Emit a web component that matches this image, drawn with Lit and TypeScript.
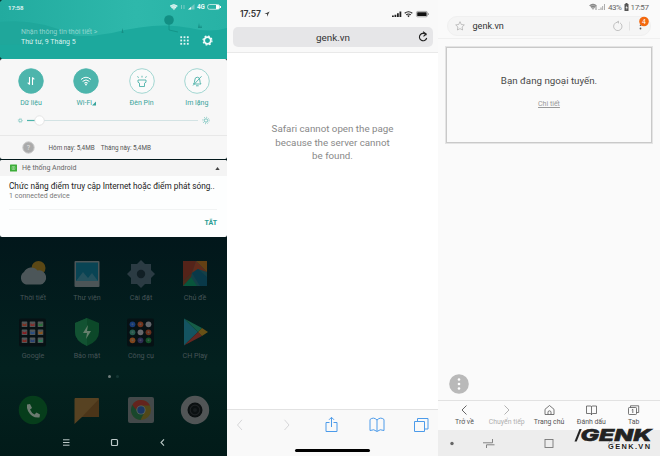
import { LitElement, html, svg, css, SVGTemplateResult } from "lit";
import { customElement } from "lit/decorators.js";

const icon = (w: number, h: number, body: SVGTemplateResult, cls = "") =>
  html`<svg class=${cls} width=${w} height=${h} viewBox="0 0 ${w} ${h}" fill="none">${body}</svg>`;

/* ---------- MIUI phone ---------- */

@customElement("miui-phone")
class MiuiPhone extends LitElement {
  static styles = css`
    :host { display: flex; flex-direction: column; width: 227px; height: 456px; background: #02181b; font-family: Roboto, "Noto Sans", sans-serif; box-sizing: border-box; }
    svg { display: block; flex: none; }
    .head { height: 59px; display: grid; background: #1eab9e; flex: none; }
    .head > * { grid-area: 1 / 1; }
    .headtext { display: flex; flex-direction: column; z-index: 1; }
    .status { height: 14px; display: flex; align-items: center; justify-content: space-between; padding: 0 5px 0 8px; color: #e4f7f5; font-size: 6.1px; font-weight: 600; }
    .row { display: flex; align-items: flex-end; justify-content: space-between; height: 33px; padding: 0 14px 0 21px; }
    .weather { font-size: 7px; line-height: 9.3px; color: #d9f3f0; white-space: nowrap; }
    .weather .dim { color: #8fd4cd; font-size: 7px; }
    .tools { display: flex; gap: 13px; align-items: center; padding-bottom: 1px; }
    .panel { height: 100px; flex: none; background: #f7f7f7; border-radius: 2px; display: flex; flex-direction: column; }
    .tiles { display: grid; grid-template-columns: repeat(4, 55.3px); padding: 9px 0 0 3.3px; }
    .tile { display: flex; flex-direction: column; align-items: center; font-size: 7px; line-height: 8px; color: #37a49b; gap: 5px; }
    .wifi { display: flex; align-items: center; }
    .slider { height: 28px; box-sizing: border-box; display: flex; align-items: flex-start; padding: 7px 0 0 17px; }
    .usage { border-top: 1px solid #e8e8e8; flex: 1; display: flex; align-items: center; padding-left: 22px; font-size: 6.35px; color: #555; white-space: nowrap; }
    .usage .a { margin-left: 13.5px; }
    .usage .b { margin-left: 6px; }
    .notice { margin-top: 1px; height: 77px; flex: none; background: #fdfefe; border-radius: 2px; overflow: hidden; }
    .nhead { height: 16px; background: #f4f4f4; display: flex; align-items: center; padding: 0 7px 0 10px; font-size: 7px; color: #666; gap: 5px; }
    .nhead svg:last-child { margin-left: auto; }
    .ntitle { padding: 4.5px 0 0 9px; font-size: 8.25px; line-height: 10px; color: #222; white-space: nowrap; }
    .nsub { padding-left: 9px; font-size: 7px; line-height: 11px; color: #777; letter-spacing: 0.03px; }
    .nact { margin: 7px 10px 0 9px; border-top: 1px solid #f1f3f3; height: 28px; line-height: 27px; text-align: right; font-size: 7px; font-weight: 700; color: #2a9d93; }
    .home { flex: 1; display: flex; flex-direction: column; background: linear-gradient(#02171b, #03211f 60%, #021b19); }
    .apps { display: grid; grid-template-columns: repeat(4, 54px); padding: 22px 0 0 6px; row-gap: 9px; }
    .app { display: flex; flex-direction: column; align-items: center; height: 49px; font-size: 7.15px; line-height: 9px; color: #465457; gap: 4.4px; }
    .dots { height: 10px; margin-top: 5px; display: flex; justify-content: center; align-items: center; gap: 5px; }
    .dots i { width: 3px; height: 3px; border-radius: 50%; background: #6f7c7b; }
    .dots i + i { background: #153634; }
    .dock { display: grid; grid-template-columns: repeat(4, 54px); justify-items: center; padding: 14px 0 0 6px; }
    .nav { display: flex; justify-content: center; padding: 12.6px 0 0 2px; gap: 39.3px; }
  `;

  private tile(label: unknown, on: boolean, glyph: SVGTemplateResult) {
    return html`<div class="tile">
      ${icon(26, 26, svg`<circle cx="13" cy="13" r="12.3" fill=${on ? "#4db5ac" : "#fafafa"} stroke=${on ? "#4db5ac" : "#8ccdc7"} stroke-width=".8"/>${glyph}`)}
      <span class="wifi">${label}</span></div>`;
  }

  private app(label: string, glyph: SVGTemplateResult) {
    return html`<div class="app">${icon(30, 30, glyph)}<span>${label}</span></div>`;
  }

  private folder(colors: string[], round: boolean) {
    return svg`<rect x="1" y="1.500" width="27" height="28" rx="2" fill="#061114"/>
      ${colors.map((c, i) => {
        const x = 6.5 + (i % 3) * 8, y = 7.3 + Math.floor(i / 3) * 8;
        return round
          ? svg`<circle cx=${x} cy=${y} r="2.900" fill=${c}/><circle cx=${x} cy=${y} r="1" fill="#59666a" opacity=".6"/>`
          : svg`<rect x=${x - 2.8} y=${y - 2.8} width="5.600" height="5.600" rx=".6" fill="#505758"/><path d="M${x - 2} ${y + 1.8}v-3l2 1.500 2-1.500v3z" fill=${c}/>`;
      })}`;
  }

  render() {
    return html`
      <div class="head">
        ${icon(227, 59, svg`
          <defs><linearGradient id="g" x1="0" y1="0" x2="1" y2="0"><stop offset="0" stop-color="#22ab9f"/><stop offset=".6" stop-color="#2eb8ab"/><stop offset="1" stop-color="#27b2a5"/></linearGradient></defs>
          <rect width="227" height="59" fill="url(#g)"/>
          <path d="M0 22Q38 18 75 36L100 36V59H0Z" fill="#1fa79b"/>
          <path d="M60 43Q88 36 112 33Q158 21 190 28Q210 33 227 28V59H0V45Z" fill="#1ca99d"/>
          <circle cx="169" cy="20" r="4.800" fill="#128f84"/><path d="M169 24v6l9 2" stroke="#128f84" stroke-width=".8"/>
          <path d="M121.500 33l1-5 1 5zM198 28l1-5 1 5 1-3 1 3z" fill="#168f85"/>
          <path d="M0 0h2L0 2zM0 59h2L0 57z" fill="#083b38"/>`)}
        <div class="headtext">
          <div class="status"><span>17:58</span>
            ${icon(53, 8, svg`
              <path d="M1 3Q4.800 0 8.500 3L5 7.300Z" fill="#b8e6e1"/><path d="M1 3Q4.800 0 8.500 3M2.400 4.700Q4.800 2.800 7 4.700" stroke="#e9faf8" stroke-width=".8"/>
              <path d="M12.500 2v4M15 2v4" stroke="#7bcac3"/><path d="M19 6.500L25.500 1v5.500Z" fill="#75c8c1"/><path d="M19 6.500L22 4v2.500Z" fill="#f0fbfa"/>
              <text x="28" y="6.300" font-size="6.300" font-weight="700" fill="#eafaf8">4G</text>
              <rect x="38.600" y="1.500" width="12" height="4.800" rx="2" stroke="#d7f2ef" stroke-width=".8"/><path d="M47 2h2q1.500 0 1.500 2t-1.500 2h-2zM51 3h1v2h-1z" fill="#fff"/>`)}
          </div>
          <div class="row">
            <div class="weather"><div class="dim">Nhận thông tin thời tiết &gt;</div><div>Thứ tư, 9 Tháng 5</div></div>
            <div class="tools">
              ${icon(9, 9, svg`${[0, 1, 2].map(r => [0, 1, 2].map(c => svg`<rect x=${0.3 + c * 3.3} y=${0.3 + r * 3.3} width="1.800" height="1.800" fill="#e2f6f4"/>`))}`)}
              ${icon(11, 11, svg`<circle cx="5.500" cy="5.500" r="3.300" stroke="#f1fbfa" stroke-width="1.800"/><circle cx="5.500" cy="5.500" r="4.500" stroke="#f1fbfa" stroke-width="1.200" stroke-dasharray="1.770 1.770"/>`)}
            </div>
          </div>
        </div>
      </div>
      <div class="panel">
        <div class="tiles">
          ${this.tile("Dữ liệu", true, svg`<path d="M11.500 9v7.500M11.700 16.700L9.700 14.700M14.500 17V9.500M14.300 9.300L16.300 11.300" stroke="#fff" stroke-width="1.100"/>`)}
          ${this.tile(html`Wi-Fi${icon(4, 6, svg`<path d="M0 5.500L4 1.500v4z" fill="#37a49b"/>`)}`, true, svg`<path d="M8 11.500Q13 7 18 11.500M9.600 13.400Q13 10.400 16.400 13.400M11.200 15.200Q13 13.600 14.800 15.200" stroke="#fff"/><circle cx="13" cy="16.500" r=".9" fill="#fff"/>`)}
          ${this.tile("Đèn Pin", false, svg`<path d="M9 12h8v2.200l-1.500 1v3.300h-5v-3.300L9 14.200ZM9.500 9.800L8.600 8.300M13 9.500V7.800M16.500 9.800L17.400 8.300" stroke="#4cb1a8" stroke-width=".9"/>`)}
          ${this.tile("Im lặng", false, svg`<path d="M9.500 16h7.500q-1.200-1.400-1.200-4Q15.700 9.200 13.300 9.200T10.800 12Q10.800 14.600 9.500 16ZM12 17.800h2.700M9 17.500L17.500 8.300" stroke="#4cb1a8" stroke-width=".9"/>`)}
        </div>
        <div class="slider">${icon(195, 13, svg`
          <circle cx="3.300" cy="6.500" r="1.400" stroke="#6dbfb8" stroke-width=".8"/><circle cx="3.300" cy="6.500" r="2.200" stroke="#8dcdc7" stroke-width=".6" stroke-dasharray=".8 .9"/>
          <path d="M10 6.500h9" stroke="#4db5ac" stroke-width="1.200"/><path d="M20 6.500h161" stroke="#d3e3e4" stroke-width="1"/>
          <circle cx="22.500" cy="6.500" r="4.700" fill="#fff" stroke="#dbdbdb" stroke-width=".7"/>
          <circle cx="189" cy="6.500" r="1.700" stroke="#5cb8b0" stroke-width=".8"/><circle cx="189" cy="6.500" r="3.200" stroke="#5cb8b0" stroke-width="1" stroke-dasharray=".8 1.713"/>`)}
        </div>
        <div class="usage">
          ${icon(13, 13, svg`<circle cx="6.500" cy="6.500" r="5.700" fill="#aaa" stroke="#ccc"/><text x="6.500" y="9" text-anchor="middle" font-size="7" fill="#e4e4e4">?</text>`)}
          <span class="a">Hôm nay: 5,4MB</span><span class="b">Tháng này: 5,4MB</span>
        </div>
      </div>
      <div class="notice">
        <div class="nhead">
          ${icon(7, 8, svg`<rect y=".5" width="7" height="7" rx=".5" fill="#3dad39"/><path d="M2 2.500h3v3H2zM2 4h3M3.500 2.500v3" stroke="#b4e2b2" stroke-width=".5"/>`)}
          <span>Hệ thống Android</span>
          ${icon(5, 5, svg`<path d="M.3 4L2.500 1L4.700 4Z" fill="#444"/>`)}
        </div>
        <div class="ntitle">Chức năng điểm truy cập Internet hoặc điểm phát sóng..</div>
        <div class="nsub">1 connected device</div>
        <div class="nact">TẮT</div>
      </div>
      <div class="home">
        <div class="apps">
          ${this.app("Thời tiết", svg`<circle cx="20.500" cy="9" r="7" fill="#5b4815"/><path d="M8 25.500a7 7 0 0 1-2-12.500 8 8 0 0 1 13.500-1.500 7 7 0 0 1 3 14z" fill="#4c5659"/>`)}
          ${this.app("Thư viện", svg`<rect x="2.500" y="2" width="25" height="26" rx="1" fill="#4c5557"/><rect x="4" y="3.500" width="22" height="18.500" fill="#094454"/><path d="M4 22l7-9 5 6 4-5 6 8z" fill="#25515d"/>`)}
          ${this.app("Cài đặt", svg`<path d="M15 1l4 4h6v6l4 4-4 4v6h-6l-4 4-4-4H5v-6l-4-4 4-4V5h6z" fill="#2b3b43"/><circle cx="15" cy="15" r="4.200" fill="#111f25"/>`)}
          ${this.app("Chủ đề", svg`<path d="M3 2h24v25H3z" fill="#144047"/><path d="M3 2h13L12 14 3 22z" fill="#542319"/><path d="M16 2h11v11z" fill="#634014"/><path d="M16 2l11 11-9-3-6 4z" fill="#612b1b"/><path d="M12 14l6-4 9 8v9h-7z" fill="#093949"/><path d="M3 27l8-9 6 9z" fill="#08553b"/><path d="M3 22l9-8-1 4-8 9z" fill="#4a2b1b"/>`)}
          ${this.app("Google", this.folder(["#803020", "#842d2b", "#277137", "#891c20", "#284e83", "#8b551c", "#812823", "#284275", "#287d54"], false))}
          ${this.app("Bảo mật", svg`<path d="M15 1l12 5v9q0 9-12 14Q3 24 3 15V6z" fill="#0c4829"/><path d="M15 1v28Q3 24 3 15V6z" fill="#125232"/><path d="M16 8l-5 8h4l-1 6 5-8h-4z" fill="#65806d"/>`)}
          ${this.app("Công cụ", this.folder(["#173b78", "#71331b", "#64676c", "#265a4c", "#69686c", "#682f1c", "#7f451c", "#2d2c52", "#145028"], true))}
          ${this.app("CH Play", svg`<path d="M4 1.500L18 15 4 28.500z" fill="#145461"/><path d="M4 1.500l18 9.500-4 4z" fill="#155d47"/><path d="M4 28.500L22 19l-4-4z" fill="#652721"/><path d="M22 11l6 4-6 4-4-4z" fill="#685116"/>`)}
        </div>
        <div class="dots"><i></i><i></i></div>
        <div class="dock">
          ${icon(30, 30, svg`<circle cx="15" cy="15" r="14.300" fill="#063d1b"/><path d="M9 9.500l3-.5 2 4-2 1.500q1.500 3.500 4.500 5l2-2 3.500 2-.5 3Q14 23.500 10 16q-1.500-3-1-6.500z" fill="#6b7b70"/>`)}
          ${icon(30, 30, svg`<path d="M3 3h23q1 0 1 1v17q0 1-1 1H10l-7.500 7V4z" fill="#574222"/><path d="M27 4v18H10z" fill="#4b3519"/>`)}
          ${icon(30, 30, svg`<rect x="2" y="2" width="26" height="26" rx="2" fill="#43494a"/><circle cx="15" cy="15" r="10" fill="#514819"/><path d="M6.300 10A10 10 0 0 1 24 10.500H15L9 15z" fill="#64241e"/><path d="M6.300 10A10 10 0 0 0 14.500 25L18 18l-6-1z" fill="#19472c"/><circle cx="15" cy="15" r="4.600" fill="#59645f"/><circle cx="15" cy="15" r="3.700" fill="#1b3762"/>`)}
          ${icon(30, 30, svg`<circle cx="15" cy="15" r="14.200" fill="#515556"/><circle cx="15" cy="15" r="7.500" fill="#0b1011"/><circle cx="15" cy="15" r="4.800" stroke="#1d2123" stroke-width="1.200"/><circle cx="15" cy="15" r="2" fill="#171c1e"/>`)}
        </div>
        <div class="nav">
          ${icon(8, 9, svg`<path d="M1 1.800h6.500M1 4.500h6.500M1 7.200h6.500" stroke="#bdc9c8" stroke-width="1"/>`)}
          ${icon(9, 9, svg`<rect x="1.500" y="1.500" width="6" height="6" rx="1" stroke="#bdc9c8" stroke-width="1.200"/>`)}
          ${icon(9, 9, svg`<path d="M6 1.300L3 4.500l3 3.200" stroke="#bdc9c8" stroke-width="1.100"/>`)}
        </div>
      </div>`;
  }
}

/* ---------- Safari phone ---------- */

@customElement("safari-phone")
class SafariPhone extends LitElement {
  static styles = css`
    :host { display: flex; flex-direction: column; width: 211px; height: 456px; background: #fff; font-family: Inter, "Liberation Sans", sans-serif; }
    svg { display: block; flex: none; }
    .top { height: 53px; box-sizing: border-box; background: #f9f9f9; border-bottom: 1px solid #e9e9e9; flex: none; }
    .status { height: 27px; display: flex; align-items: center; padding: 0 8px 0 13px; font-size: 8.6px; font-weight: 600; color: #333; box-sizing: border-box; letter-spacing: -0.1px; }
    .status svg:first-of-type { margin-left: 3px; }
    .status svg:last-of-type { margin-left: auto; }
    .bar { height: 20px; margin: 0 5px 0 6px; border-radius: 5px; background: #e6e6e8; display: grid; grid-template-columns: 1fr auto; align-items: center; padding: 0 5px 0 5px; font-family: Roboto, sans-serif; }
    .bar > * { grid-row: 1; }
    .url { grid-column: 1 / 3; text-align: center; font-size: 9.9px; color: #333; }
    .bar svg { grid-column: 2; }
    .msg { flex: 1; padding: 69px 0 0 0; text-align: center; font-family: Roboto, sans-serif; font-size: 9.75px; line-height: 13.5px; color: #888; }
    .bottom { height: 47px; background: #f9f9f9; border-top: 1px solid #e2e2e2; box-sizing: border-box; display: flex; flex-direction: column; }
    .tools { display: flex; gap: 27.6px; padding: 5px 0 0 4px; }
    .pill { width: 75px; height: 3px; border-radius: 2px; background: #000; margin: 15px 0 0 68px; }
  `;

  render() {
    return html`
      <div class="top">
        <div class="status"><span>17:57</span>
          ${icon(6, 6, svg`<path d="M5.600 .4L3 5.700V3.100H.4Z" fill="#444"/>`)}
          ${icon(38, 8, svg`
            <path d="M0 5.500h1.800v1.500H0zM2.500 4.700h1.800V7H2.500zM5 3.300h1.800V7H5zM7.500 1.500h1.800V7H7.500z" fill="#222"/>
            <path d="M12.700 3.300Q16.500 .3 20.300 3.300M14.200 4.900Q16.500 3 18.800 4.900" stroke="#222" stroke-width="1.100"/><path d="M15.200 5.800q1.300-1 2.600 0L16.500 7.200Z" fill="#222"/>
            <rect x="24.400" y="1.400" width="11" height="5.400" rx="1.300" stroke="#888" stroke-width=".7"/><rect x="25.200" y="2.200" width="9.400" height="3.800" rx=".5" fill="#111"/><path d="M36.500 3.200v1.800" stroke="#888" stroke-width=".8"/>`)}
        </div>
        <div class="bar"><span class="url">genk.vn</span>
          ${icon(10, 12, svg`<path d="M8.300 4.200A3.700 3.700 0 1 0 8.700 7" stroke="#222" stroke-width="1.100"/><path d="M5 .8L8.200 3 5.500 5.400" stroke="#222" stroke-width="1.100"/>`)}
        </div>
      </div>
      <div class="msg">Safari cannot open the page<br />because the server cannot<br />be found.</div>
      <div class="bottom">
        <div class="tools">
          ${icon(18, 19, svg`<path d="M11 4.800L6.500 10l4.500 5" stroke="#d3d3d5" stroke-width=".9"/>`)}
          ${icon(18, 19, svg`<path d="M7.500 4.800L12 10l-4.500 5" stroke="#d3d3d5" stroke-width=".9"/>`)}
          ${icon(18, 19, svg`<path d="M7.500 7.500H4v9h11v-9H11.500M9.500 12V2.500M7 4.800L9.500 2.300l2.500 2.500" stroke="#4c9bea" stroke-width="1"/>`)}
          ${icon(18, 19, svg`<path d="M9 5Q5.500 1.500 2 4.500V15.500Q6 13.500 9 16.500Q12 13.500 16 15.500V4.500Q12.500 1.500 9 5ZM9 5V16" stroke="#4c9bea" stroke-width="1"/>`)}
          ${icon(18, 19, svg`<path d="M1.500 6.500h10v10h-10zM4.500 6.500v-3h10.500v10.500h-3.500" stroke="#4c9bea" stroke-width="1"/>`)}
        </div>
        <div class="pill"></div>
      </div>`;
  }
}

/* ---------- Samsung phone ---------- */

@customElement("samsung-phone")
class SamsungPhone extends LitElement {
  static styles = css`
    :host { display: flex; flex-direction: column; width: 222px; height: 456px; background: #fafafa; font-family: Roboto, "Noto Sans", sans-serif; }
    svg { display: block; flex: none; }
    .top { height: 38px; border-bottom: 1px solid #f0f0f0; box-sizing: content-box; flex: none; }
    .status { height: 16px; box-sizing: border-box; padding: 0 11.5px 2px 0; display: flex; align-items: center; justify-content: flex-end; font-size: 8px; color: #666; letter-spacing: -0.4px; }
    .status .pct { margin: 0 2px 0 3px; }
    .status .time { margin-left: 2px; }
    .bar { width: 204px; height: 20px; margin-left: 9px; box-sizing: border-box; border: 1px solid #f0f0f0; border-radius: 10px; background: #f5f5f5; display: flex; align-items: center; padding: 0 1px 0 6.5px; font-size: 9.1px; color: #333; }
    .url { margin: 0 auto 0 8px; }
    .frame { margin: 8px 0 0 8px; width: 206px; height: 96px; border: 1px solid #c9c9c9; outline: 0.5px solid #e4e4e4; box-sizing: border-box; display: flex; flex-direction: column; align-items: center; flex: none; }
    .offline { margin-top: 26px; font-size: 9.75px; line-height: 13px; color: #484848; }
    .more { margin-top: 12px; font-size: 7px; line-height: 10px; color: #999; text-decoration: underline; }
    .space { flex: 1; display: flex; align-items: flex-end; padding: 0 0 6px 11px; }
    .tabs { height: 30px; box-sizing: border-box; border-top: 1px solid #e2e2e2; display: grid; grid-template-columns: repeat(5, 42.3px); padding: 3px 0 0 5.3px; background: #fbfbfb; }
    .tab { display: flex; flex-direction: column; align-items: center; gap: 1px; font-size: 6.9px; line-height: 10px; color: #555; white-space: nowrap; }
    .tab.off { color: #b0b0b0; }
    .nav { height: 26px; background: #ededed; }
    .mark { overflow: visible; }
  `;

  private tab(label: string, glyph: SVGTemplateResult, off = false) {
    return html`<div class="tab ${off ? "off" : ""}">${icon(13, 12, glyph)}<span>${label}</span></div>`;
  }

  render() {
    return html`
      <div class="top">
        <div class="status">
          ${icon(16, 8, svg`<path d="M.5 2.500Q4-.3 7.500 2.500L4 7Z" fill="#aaa"/><path d="M.5 2.500Q4-.3 7.500 2.500M2 4Q4 2.500 6 4M7 3v4" stroke="#777" stroke-width=".8"/><path d="M9.500 7h1V6h-1zM11.500 7h1V4.500h-1zM13.300 7h.8V3h-.8zM15 7h.8V1H15z" fill="#999"/>`)}
          <span class="pct">43%</span>
          ${icon(5, 8, svg`<path d="M1.500 0h2v1h1v7h-4V1h1z" fill="#555"/><path d="M1.500 5l1.300-2.500v1.700h1L2.500 7V5z" fill="#eee"/>`)}
          <span class="time">17:57</span>
        </div>
        <div class="bar">
          ${icon(10, 10, svg`<path d="M5 .7l1.300 2.800 3 .4-2.200 2.100.5 3L5 7.600 2.400 9l.5-3L.7 3.900l3-.4z" stroke="#aaa" stroke-width=".7"/>`)}
          <span class="url">genk.vn</span>
          ${icon(40, 20, svg`<path d="M8.500 6.200A4.200 4.200 0 1 0 11 6.800M8 6.200l1.500-1v2.200" stroke="#aaa" stroke-width=".7"/><path d="M20.500 5.500v9" stroke="#ddd" stroke-width=".8"/>
            <circle cx="31.500" cy="9.200" r=".8" fill="#555"/><circle cx="31.500" cy="12.500" r=".9" fill="#555"/>
            <circle cx="35" cy="5.500" r="4.800" fill="#f3690f"/><text x="35" y="8" text-anchor="middle" font-size="6.800" fill="#fff">4</text>`)}
        </div>
      </div>
      <div class="frame">
        <div class="offline">Bạn đang ngoại tuyến.</div>
        <div class="more">Chi tiết</div>
      </div>
      <div class="space">${icon(20, 20, svg`<circle cx="10" cy="10" r="9.800" fill="#b9b9b9"/><circle cx="10" cy="5.500" r="1.300" fill="#fff"/><circle cx="10" cy="10" r="1.300" fill="#fff"/><circle cx="10" cy="14.500" r="1.300" fill="#fff"/>`)}</div>
      <div class="tabs">
        ${this.tab("Trở về", svg`<path d="M8.500 1.500L4 6l4.500 4.500" stroke="#555" stroke-width=".9"/>`)}
        ${this.tab("Chuyển tiếp", svg`<path d="M4.500 1.500L9 6l-4.500 4.500" stroke="#aaa" stroke-width=".9"/>`, true)}
        ${this.tab("Trang chủ", svg`<path d="M2 5.300L6.500 1.500 11 5.300V10.500H2ZM5 10.500V8.300q0-1.500 1.500-1.500T8 8.300v2.200" stroke="#555" stroke-width=".8"/>`)}
        ${this.tab("Đánh dấu", svg`<path d="M6.500 3Q6.500 2 5.500 2H1.500V9.500H5.500Q6.500 9.500 6.500 11Q6.500 9.500 7.500 9.500H11.500V2H7.500Q6.500 2 6.500 3V10.500" stroke="#555" stroke-width=".8"/>`)}
        ${this.tab("Tab", svg`<rect x="1.500" y="3.500" width="8" height="7" rx=".8" stroke="#555" stroke-width=".8"/><path d="M3.500 3.500V1.800h8.200V8.500H9.500M4.800 6l1-.8V9" stroke="#555" stroke-width=".8"/>`)}
      </div>
      <div class="nav">${icon(222, 26, svg`
        <circle cx="14" cy="13.500" r="1.700" fill="#666"/>
        <path d="M45 12.800h9.500V9M56.500 14.800H48.500V18" stroke="#777" stroke-width=".9"/>
        <rect x="107" y="9.500" width="8" height="8" stroke="#777" stroke-width=".9"/>
        <path d="M173 13h4M172 11l-2 3 2 2" stroke="#aaa" stroke-width=".8"/>
        <path d="M136.500 11.500L141.500-1h2.200L138.700 11.500Z" fill="#222"/>
        <text x="142.500" y="11.300" font-family="Inter" font-size="16.500" font-weight="800" font-style="italic" textLength="71" lengthAdjust="spacingAndGlyphs" fill="#222" stroke="#222" stroke-width=".6">GENK</text>
        <text x="170" y="19.200" font-family="Liberation Sans" font-size="7.400" font-weight="700" textLength="42" lengthAdjust="spacing" fill="#1c1c1c" stroke="#f3f3f3" stroke-width="1.200" paint-order="stroke">GENK.VN</text>`, "mark")}
      </div>`;
  }
}

@customElement("app-root")
class AppRoot extends LitElement {
  static styles = css`
    :host { display: flex; width: 660px; height: 456px; overflow: hidden; background: #fafafa; }
  `;
  render() {
    return html`<miui-phone></miui-phone><safari-phone></safari-phone><samsung-phone></samsung-phone>`;
  }
}
